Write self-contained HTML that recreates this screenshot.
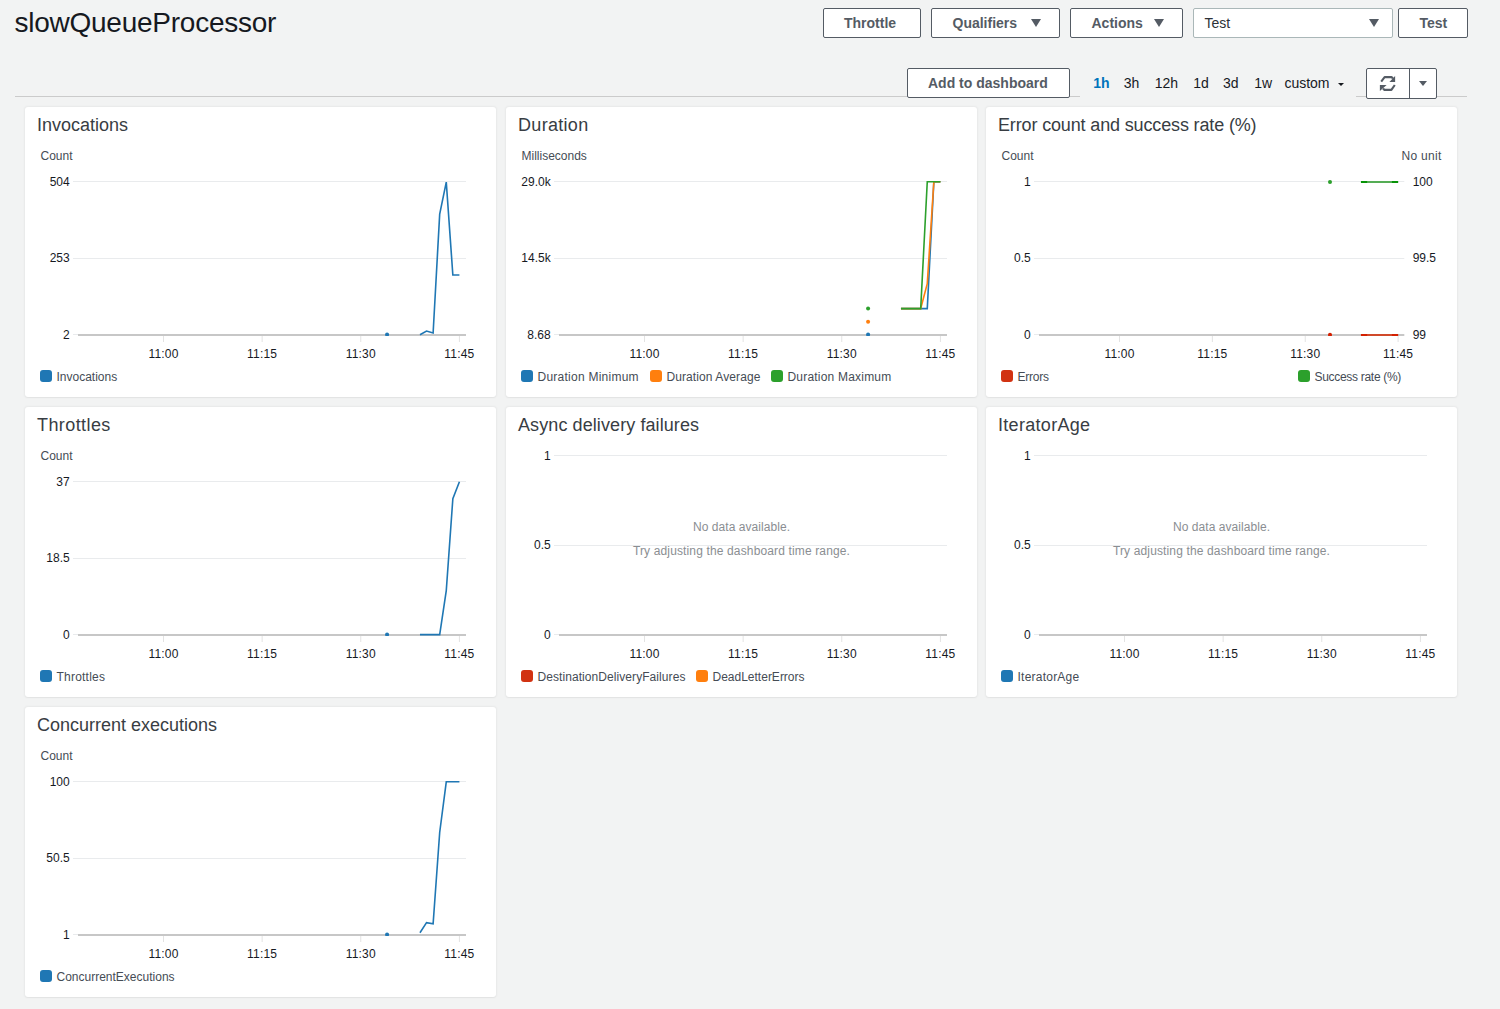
<!DOCTYPE html>
<html><head><meta charset="utf-8">
<style>
html,body{margin:0;padding:0;}
body{width:1500px;height:1009px;overflow:hidden;background:#f2f3f3;position:relative;font-family:"Liberation Sans", sans-serif;}
.t{position:absolute;white-space:nowrap;line-height:1;}
.panel{position:absolute;background:#fff;border-radius:3px;box-shadow:0 0 2px 1px rgba(0,0,0,0.045), 0 1px 1px rgba(0,0,0,0.03);}
.chart{position:absolute;left:0;top:0;}
.sw{position:absolute;width:12px;height:12px;border-radius:3px;}
.btn{position:absolute;box-sizing:border-box;border:1px solid #545b64;border-radius:2px;background:#fff;}
.tri{position:absolute;width:0;height:0;border-left:5px solid transparent;border-right:5px solid transparent;border-top:8px solid #545b64;}
.tri2{position:absolute;width:0;height:0;border-left:4px solid transparent;border-right:4px solid transparent;border-top:5px solid #545b64;}
.caret{position:absolute;width:0;height:0;border-left:3px solid transparent;border-right:3px solid transparent;border-top:3px solid #16191f;}
</style></head><body>
<div class="t" style="left:14.50px;top:9.30px;font-size:28px;color:#16191f;font-weight:normal;letter-spacing:-0.25px;">slowQueueProcessor</div>
<div class="btn" style="left:823px;top:8px;width:98px;height:30px;border-color:#545b64"></div><div class="t" style="left:844.00px;top:16.15px;font-size:14px;color:#545b64;font-weight:bold;">Throttle</div>
<div class="btn" style="left:931px;top:8px;width:129px;height:30px;border-color:#545b64"></div><div class="t" style="left:952.50px;top:16.15px;font-size:14px;color:#545b64;font-weight:bold;">Qualifiers</div><div class="tri" style="left:1031px;top:19px"></div>
<div class="btn" style="left:1070px;top:8px;width:113px;height:30px;border-color:#545b64"></div><div class="t" style="left:1091.50px;top:16.15px;font-size:14px;color:#545b64;font-weight:bold;">Actions</div><div class="tri" style="left:1154px;top:19px"></div>
<div class="btn" style="left:1193px;top:8px;width:200px;height:30px;border-color:#aab7b8"></div><div class="t" style="left:1204.50px;top:16.15px;font-size:14px;color:#2c3137;font-weight:normal;">Test</div><div class="tri" style="left:1369px;top:19px"></div>
<div class="btn" style="left:1398px;top:8px;width:70px;height:30px;border-color:#545b64"></div><div class="t" style="left:1419.50px;top:16.15px;font-size:14px;color:#545b64;font-weight:bold;">Test</div>
<div style="position:absolute;left:15px;top:96px;width:1065px;height:1px;background:#cbcbcb"></div>
<div style="position:absolute;left:1356px;top:96px;width:111px;height:1px;background:#cbcbcb"></div>
<div class="btn" style="left:907px;top:68px;width:163px;height:30px;border-color:#545b64"></div><div class="t" style="left:928.00px;top:76.15px;font-size:14px;color:#545b64;font-weight:bold;">Add to dashboard</div>
<div class="t" style="left:1093.30px;top:76.15px;font-size:14px;color:#0073bb;font-weight:bold;">1h</div>
<div class="t" style="left:1123.70px;top:76.15px;font-size:14px;color:#16191f;font-weight:normal;">3h</div>
<div class="t" style="left:1154.70px;top:76.15px;font-size:14px;color:#16191f;font-weight:normal;">12h</div>
<div class="t" style="left:1193.20px;top:76.15px;font-size:14px;color:#16191f;font-weight:normal;">1d</div>
<div class="t" style="left:1223.00px;top:76.15px;font-size:14px;color:#16191f;font-weight:normal;">3d</div>
<div class="t" style="left:1254.20px;top:76.15px;font-size:14px;color:#16191f;font-weight:normal;">1w</div>
<div class="t" style="left:1284.40px;top:76.15px;font-size:14px;color:#16191f;font-weight:normal;">custom</div>
<div class="caret" style="left:1338px;top:83px"></div>
<div class="btn" style="left:1366px;top:68px;width:71px;height:31px"></div>
<div style="position:absolute;left:1409px;top:68px;width:1px;height:31px;background:#545b64"></div>
<svg style="position:absolute;left:1374px;top:71px" width="28" height="24" viewBox="0 0 28 24">
<path d="M7.2,10.6 L10.6,6.1 L17.5,6.1 L19,7.4" fill="none" stroke="#545b64" stroke-width="2.1" stroke-linejoin="round"/>
<path d="M15.4,10.9 L21.1,10.9 L21.1,5.1 Z" fill="#545b64"/>
<path d="M20.8,14 L17.4,18.9 L10.5,18.9 L9,17.6" fill="none" stroke="#545b64" stroke-width="2.1" stroke-linejoin="round"/>
<path d="M12.6,14 L5.9,14 L5.9,19.9 Z" fill="#545b64"/>
</svg>
<div class="tri2" style="left:1418.5px;top:81px"></div>
<div class="panel" style="left:25px;top:107px;width:471px;height:290px">
<div class="t" style="left:12.00px;top:8.76px;font-size:18px;color:#383d43;font-weight:normal;">Invocations</div>
<div class="t" style="left:15.50px;top:42.84px;font-size:12px;color:#454c55;font-weight:normal;">Count</div>
<svg class="chart" width="471" height="290" viewBox="0 0 471 290"><line x1="48" y1="74.5" x2="441" y2="74.5" stroke="#e9ebed" stroke-width="1"/><line x1="48" y1="151.5" x2="441" y2="151.5" stroke="#e9ebed" stroke-width="1"/><line x1="48" y1="227.5" x2="53" y2="227.5" stroke="#e9ebed" stroke-width="1"/><clipPath id="c25_107"><rect x="53" y="0" width="393" height="229"/></clipPath><line x1="53" y1="228" x2="441" y2="228" stroke="#c7c7c7" stroke-width="2"/><line x1="138.49" y1="229" x2="138.49" y2="235" stroke="#e3e3e3" stroke-width="1"/><line x1="237.14" y1="229" x2="237.14" y2="235" stroke="#e3e3e3" stroke-width="1"/><line x1="335.78" y1="229" x2="335.78" y2="235" stroke="#e3e3e3" stroke-width="1"/><line x1="434.42" y1="229" x2="434.42" y2="235" stroke="#e3e3e3" stroke-width="1"/><g clip-path="url(#c25_107)"><path d="M394.97,227.80 L401.54,224.00 L408.12,226.00 L414.69,107.20 L421.27,75.10 L427.85,168.00 L434.42,168.00" fill="none" stroke="#1f77b4" stroke-width="1.6" stroke-linejoin="miter"/><circle cx="362.08" cy="227.5" r="2" fill="#1f77b4"/></g></svg>
<div class="t" style="right:calc(100% - 44.70px);top:68.84px;font-size:12px;color:#16191f;font-weight:normal;">504</div>
<div class="t" style="right:calc(100% - 44.70px);top:144.84px;font-size:12px;color:#16191f;font-weight:normal;">253</div>
<div class="t" style="right:calc(100% - 44.70px);top:221.84px;font-size:12px;color:#16191f;font-weight:normal;">2</div>
<div class="t" style="left:138.49px;transform:translateX(-50%);top:240.84px;font-size:12px;color:#16191f;font-weight:normal;letter-spacing:0.2px;">11:00</div>
<div class="t" style="left:237.14px;transform:translateX(-50%);top:240.84px;font-size:12px;color:#16191f;font-weight:normal;letter-spacing:0.2px;">11:15</div>
<div class="t" style="left:335.78px;transform:translateX(-50%);top:240.84px;font-size:12px;color:#16191f;font-weight:normal;letter-spacing:0.2px;">11:30</div>
<div class="t" style="left:434.42px;transform:translateX(-50%);top:240.84px;font-size:12px;color:#16191f;font-weight:normal;letter-spacing:0.2px;">11:45</div>
<div class="sw" style="left:15px;top:263px;background:#1f77b4"></div>
<div class="t" style="left:31.50px;top:263.84px;font-size:12px;color:#454c55;font-weight:normal;">Invocations</div>
</div>
<div class="panel" style="left:506px;top:107px;width:471px;height:290px">
<div class="t" style="left:12.00px;top:8.76px;font-size:18px;color:#383d43;font-weight:normal;letter-spacing:0.31px;">Duration</div>
<div class="t" style="left:15.50px;top:42.84px;font-size:12px;color:#454c55;font-weight:normal;">Milliseconds</div>
<svg class="chart" width="471" height="290" viewBox="0 0 471 290"><line x1="48" y1="74.5" x2="441" y2="74.5" stroke="#e9ebed" stroke-width="1"/><line x1="48" y1="151.5" x2="441" y2="151.5" stroke="#e9ebed" stroke-width="1"/><line x1="48" y1="227.5" x2="53" y2="227.5" stroke="#e9ebed" stroke-width="1"/><clipPath id="c506_107"><rect x="53" y="0" width="393" height="229"/></clipPath><line x1="53" y1="228" x2="441" y2="228" stroke="#c7c7c7" stroke-width="2"/><line x1="138.49" y1="229" x2="138.49" y2="235" stroke="#e3e3e3" stroke-width="1"/><line x1="237.14" y1="229" x2="237.14" y2="235" stroke="#e3e3e3" stroke-width="1"/><line x1="335.78" y1="229" x2="335.78" y2="235" stroke="#e3e3e3" stroke-width="1"/><line x1="434.42" y1="229" x2="434.42" y2="235" stroke="#e3e3e3" stroke-width="1"/><g clip-path="url(#c506_107)"><path d="M394.97,201.60 L414.69,201.60 L421.27,201.60 L427.85,74.80 L434.42,74.80" fill="none" stroke="#1f77b4" stroke-width="1.6" stroke-linejoin="miter"/><path d="M394.97,201.60 L414.69,201.60 L421.27,176.60 L427.85,74.80 L434.42,74.80" fill="none" stroke="#ff7f0e" stroke-width="1.6" stroke-linejoin="miter"/><path d="M394.97,201.60 L414.69,201.60 L421.27,74.80 L427.85,74.80 L434.42,74.80" fill="none" stroke="#2ca02c" stroke-width="1.6" stroke-linejoin="miter"/><circle cx="362.08" cy="227.5" r="2" fill="#1f77b4"/><circle cx="362.08" cy="214.8" r="2" fill="#ff7f0e"/><circle cx="362.08" cy="201.4" r="2" fill="#2ca02c"/></g></svg>
<div class="t" style="right:calc(100% - 44.70px);top:68.84px;font-size:12px;color:#16191f;font-weight:normal;">29.0k</div>
<div class="t" style="right:calc(100% - 44.70px);top:144.84px;font-size:12px;color:#16191f;font-weight:normal;">14.5k</div>
<div class="t" style="right:calc(100% - 44.70px);top:221.84px;font-size:12px;color:#16191f;font-weight:normal;">8.68</div>
<div class="t" style="left:138.49px;transform:translateX(-50%);top:240.84px;font-size:12px;color:#16191f;font-weight:normal;letter-spacing:0.2px;">11:00</div>
<div class="t" style="left:237.14px;transform:translateX(-50%);top:240.84px;font-size:12px;color:#16191f;font-weight:normal;letter-spacing:0.2px;">11:15</div>
<div class="t" style="left:335.78px;transform:translateX(-50%);top:240.84px;font-size:12px;color:#16191f;font-weight:normal;letter-spacing:0.2px;">11:30</div>
<div class="t" style="left:434.42px;transform:translateX(-50%);top:240.84px;font-size:12px;color:#16191f;font-weight:normal;letter-spacing:0.2px;">11:45</div>
<div class="sw" style="left:15px;top:263px;background:#1f77b4"></div>
<div class="t" style="left:31.50px;top:263.84px;font-size:12px;color:#454c55;font-weight:normal;letter-spacing:0.25px;">Duration Minimum</div>
<div class="sw" style="left:144px;top:263px;background:#ff7f0e"></div>
<div class="t" style="left:160.50px;top:263.84px;font-size:12px;color:#454c55;font-weight:normal;letter-spacing:0.09px;">Duration Average</div>
<div class="sw" style="left:265px;top:263px;background:#2ca02c"></div>
<div class="t" style="left:281.50px;top:263.84px;font-size:12px;color:#454c55;font-weight:normal;letter-spacing:0.2px;">Duration Maximum</div>
</div>
<div class="panel" style="left:986px;top:107px;width:471px;height:290px">
<div class="t" style="left:12.00px;top:8.76px;font-size:18px;color:#383d43;font-weight:normal;letter-spacing:-0.145px;">Error count and success rate (%)</div>
<div class="t" style="left:15.50px;top:42.84px;font-size:12px;color:#454c55;font-weight:normal;">Count</div>
<div class="t" style="right:calc(100% - 455.50px);top:42.84px;font-size:12px;color:#454c55;font-weight:normal;letter-spacing:0.28px;">No unit</div>
<svg class="chart" width="471" height="290" viewBox="0 0 471 290"><line x1="48" y1="74.5" x2="418.3" y2="74.5" stroke="#e9ebed" stroke-width="1"/><line x1="48" y1="151.5" x2="418.3" y2="151.5" stroke="#e9ebed" stroke-width="1"/><line x1="48" y1="227.5" x2="53" y2="227.5" stroke="#e9ebed" stroke-width="1"/><clipPath id="c986_107"><rect x="53" y="0" width="370.3" height="229"/></clipPath><line x1="53" y1="228" x2="418.3" y2="228" stroke="#c7c7c7" stroke-width="2"/><line x1="133.49" y1="229" x2="133.49" y2="235" stroke="#e3e3e3" stroke-width="1"/><line x1="226.36" y1="229" x2="226.36" y2="235" stroke="#e3e3e3" stroke-width="1"/><line x1="319.24" y1="229" x2="319.24" y2="235" stroke="#e3e3e3" stroke-width="1"/><line x1="412.11" y1="229" x2="412.11" y2="235" stroke="#e3e3e3" stroke-width="1"/><g clip-path="url(#c986_107)"><path d="M374.96,228.00 L412.11,228.00" fill="none" stroke="#d04a2a" stroke-width="2" stroke-linejoin="miter"/><path d="M374.96,228.00 L381.15,228.00" fill="none" stroke="#d42000" stroke-width="2" stroke-linejoin="miter"/><path d="M405.92,228.00 L412.11,228.00" fill="none" stroke="#d42000" stroke-width="2" stroke-linejoin="miter"/><path d="M374.96,75.00 L412.11,75.00" fill="none" stroke="#55ad55" stroke-width="2" stroke-linejoin="miter"/><path d="M374.96,75.00 L381.15,75.00" fill="none" stroke="#079307" stroke-width="2" stroke-linejoin="miter"/><path d="M405.92,75.00 L412.11,75.00" fill="none" stroke="#079307" stroke-width="2" stroke-linejoin="miter"/><circle cx="344.00" cy="227.8" r="2" fill="#d42000"/><circle cx="344.00" cy="75" r="2" fill="#2ca02c"/></g></svg>
<div class="t" style="right:calc(100% - 44.70px);top:68.84px;font-size:12px;color:#16191f;font-weight:normal;">1</div>
<div class="t" style="right:calc(100% - 44.70px);top:144.84px;font-size:12px;color:#16191f;font-weight:normal;">0.5</div>
<div class="t" style="right:calc(100% - 44.70px);top:221.84px;font-size:12px;color:#16191f;font-weight:normal;">0</div>
<div class="t" style="left:426.70px;top:68.84px;font-size:12px;color:#16191f;font-weight:normal;">100</div>
<div class="t" style="left:426.70px;top:144.84px;font-size:12px;color:#16191f;font-weight:normal;">99.5</div>
<div class="t" style="left:426.70px;top:221.84px;font-size:12px;color:#16191f;font-weight:normal;">99</div>
<div class="t" style="left:133.49px;transform:translateX(-50%);top:240.84px;font-size:12px;color:#16191f;font-weight:normal;letter-spacing:0.2px;">11:00</div>
<div class="t" style="left:226.36px;transform:translateX(-50%);top:240.84px;font-size:12px;color:#16191f;font-weight:normal;letter-spacing:0.2px;">11:15</div>
<div class="t" style="left:319.24px;transform:translateX(-50%);top:240.84px;font-size:12px;color:#16191f;font-weight:normal;letter-spacing:0.2px;">11:30</div>
<div class="t" style="left:412.11px;transform:translateX(-50%);top:240.84px;font-size:12px;color:#16191f;font-weight:normal;letter-spacing:0.2px;">11:45</div>
<div class="sw" style="left:15px;top:263px;background:#d13212"></div>
<div class="t" style="left:31.50px;top:263.84px;font-size:12px;color:#454c55;font-weight:normal;letter-spacing:-0.25px;">Errors</div>
<div class="sw" style="left:312px;top:263px;background:#2ca02c"></div>
<div class="t" style="left:328.50px;top:263.84px;font-size:12px;color:#454c55;font-weight:normal;letter-spacing:-0.3px;">Success rate (%)</div>
</div>
<div class="panel" style="left:25px;top:407px;width:471px;height:290px">
<div class="t" style="left:12.00px;top:8.76px;font-size:18px;color:#383d43;font-weight:normal;letter-spacing:0.41px;">Throttles</div>
<div class="t" style="left:15.50px;top:42.84px;font-size:12px;color:#454c55;font-weight:normal;">Count</div>
<svg class="chart" width="471" height="290" viewBox="0 0 471 290"><line x1="48" y1="74.5" x2="441" y2="74.5" stroke="#e9ebed" stroke-width="1"/><line x1="48" y1="151.5" x2="441" y2="151.5" stroke="#e9ebed" stroke-width="1"/><line x1="48" y1="227.5" x2="53" y2="227.5" stroke="#e9ebed" stroke-width="1"/><clipPath id="c25_407"><rect x="53" y="0" width="393" height="229"/></clipPath><line x1="53" y1="228" x2="441" y2="228" stroke="#c7c7c7" stroke-width="2"/><line x1="138.49" y1="229" x2="138.49" y2="235" stroke="#e3e3e3" stroke-width="1"/><line x1="237.14" y1="229" x2="237.14" y2="235" stroke="#e3e3e3" stroke-width="1"/><line x1="335.78" y1="229" x2="335.78" y2="235" stroke="#e3e3e3" stroke-width="1"/><line x1="434.42" y1="229" x2="434.42" y2="235" stroke="#e3e3e3" stroke-width="1"/><g clip-path="url(#c25_407)"><path d="M394.97,227.60 L414.69,227.60 L421.27,183.60 L427.85,91.60 L434.42,74.80" fill="none" stroke="#1f77b4" stroke-width="1.6" stroke-linejoin="miter"/><circle cx="362.08" cy="227.5" r="2" fill="#1f77b4"/></g></svg>
<div class="t" style="right:calc(100% - 44.70px);top:68.84px;font-size:12px;color:#16191f;font-weight:normal;">37</div>
<div class="t" style="right:calc(100% - 44.70px);top:144.84px;font-size:12px;color:#16191f;font-weight:normal;">18.5</div>
<div class="t" style="right:calc(100% - 44.70px);top:221.84px;font-size:12px;color:#16191f;font-weight:normal;">0</div>
<div class="t" style="left:138.49px;transform:translateX(-50%);top:240.84px;font-size:12px;color:#16191f;font-weight:normal;letter-spacing:0.2px;">11:00</div>
<div class="t" style="left:237.14px;transform:translateX(-50%);top:240.84px;font-size:12px;color:#16191f;font-weight:normal;letter-spacing:0.2px;">11:15</div>
<div class="t" style="left:335.78px;transform:translateX(-50%);top:240.84px;font-size:12px;color:#16191f;font-weight:normal;letter-spacing:0.2px;">11:30</div>
<div class="t" style="left:434.42px;transform:translateX(-50%);top:240.84px;font-size:12px;color:#16191f;font-weight:normal;letter-spacing:0.2px;">11:45</div>
<div class="sw" style="left:15px;top:263px;background:#1f77b4"></div>
<div class="t" style="left:31.50px;top:263.84px;font-size:12px;color:#454c55;font-weight:normal;letter-spacing:0.22px;">Throttles</div>
</div>
<div class="panel" style="left:506px;top:407px;width:471px;height:290px">
<div class="t" style="left:12.00px;top:8.76px;font-size:18px;color:#383d43;font-weight:normal;letter-spacing:0.09px;">Async delivery failures</div>
<svg class="chart" width="471" height="290" viewBox="0 0 471 290"><line x1="48" y1="48.5" x2="441" y2="48.5" stroke="#e9ebed" stroke-width="1"/><line x1="48" y1="138.5" x2="441" y2="138.5" stroke="#e9ebed" stroke-width="1"/><line x1="48" y1="227.5" x2="53" y2="227.5" stroke="#e9ebed" stroke-width="1"/><clipPath id="c506_407"><rect x="53" y="0" width="393" height="229"/></clipPath><line x1="53" y1="228" x2="441" y2="228" stroke="#c7c7c7" stroke-width="2"/><line x1="138.49" y1="229" x2="138.49" y2="235" stroke="#e3e3e3" stroke-width="1"/><line x1="237.14" y1="229" x2="237.14" y2="235" stroke="#e3e3e3" stroke-width="1"/><line x1="335.78" y1="229" x2="335.78" y2="235" stroke="#e3e3e3" stroke-width="1"/><line x1="434.42" y1="229" x2="434.42" y2="235" stroke="#e3e3e3" stroke-width="1"/><g clip-path="url(#c506_407)"></g></svg>
<div class="t" style="right:calc(100% - 44.70px);top:42.84px;font-size:12px;color:#16191f;font-weight:normal;">1</div>
<div class="t" style="right:calc(100% - 44.70px);top:131.84px;font-size:12px;color:#16191f;font-weight:normal;">0.5</div>
<div class="t" style="right:calc(100% - 44.70px);top:221.84px;font-size:12px;color:#16191f;font-weight:normal;">0</div>
<div class="t" style="left:138.49px;transform:translateX(-50%);top:240.84px;font-size:12px;color:#16191f;font-weight:normal;letter-spacing:0.2px;">11:00</div>
<div class="t" style="left:237.14px;transform:translateX(-50%);top:240.84px;font-size:12px;color:#16191f;font-weight:normal;letter-spacing:0.2px;">11:15</div>
<div class="t" style="left:335.78px;transform:translateX(-50%);top:240.84px;font-size:12px;color:#16191f;font-weight:normal;letter-spacing:0.2px;">11:30</div>
<div class="t" style="left:434.42px;transform:translateX(-50%);top:240.84px;font-size:12px;color:#16191f;font-weight:normal;letter-spacing:0.2px;">11:45</div>
<div class="sw" style="left:15px;top:263px;background:#d13212"></div>
<div class="t" style="left:31.50px;top:263.84px;font-size:12px;color:#454c55;font-weight:normal;letter-spacing:0.07px;">DestinationDeliveryFailures</div>
<div class="sw" style="left:190px;top:263px;background:#ff7f0e"></div>
<div class="t" style="left:206.50px;top:263.84px;font-size:12px;color:#454c55;font-weight:normal;">DeadLetterErrors</div>
<div class="t" style="left:235.50px;transform:translateX(-50%);top:113.84px;font-size:12px;color:#8a8e92;font-weight:normal;letter-spacing:0.06px;">No data available.</div>
<div class="t" style="left:235.50px;transform:translateX(-50%);top:137.54px;font-size:12px;color:#8a8e92;font-weight:normal;letter-spacing:0.14px;">Try adjusting the dashboard time range.</div>
</div>
<div class="panel" style="left:986px;top:407px;width:471px;height:290px">
<div class="t" style="left:12.00px;top:8.76px;font-size:18px;color:#383d43;font-weight:normal;letter-spacing:0.3px;">IteratorAge</div>
<svg class="chart" width="471" height="290" viewBox="0 0 471 290"><line x1="48" y1="48.5" x2="441" y2="48.5" stroke="#e9ebed" stroke-width="1"/><line x1="48" y1="138.5" x2="441" y2="138.5" stroke="#e9ebed" stroke-width="1"/><line x1="48" y1="227.5" x2="53" y2="227.5" stroke="#e9ebed" stroke-width="1"/><clipPath id="c986_407"><rect x="53" y="0" width="393" height="229"/></clipPath><line x1="53" y1="228" x2="441" y2="228" stroke="#c7c7c7" stroke-width="2"/><line x1="138.49" y1="229" x2="138.49" y2="235" stroke="#e3e3e3" stroke-width="1"/><line x1="237.14" y1="229" x2="237.14" y2="235" stroke="#e3e3e3" stroke-width="1"/><line x1="335.78" y1="229" x2="335.78" y2="235" stroke="#e3e3e3" stroke-width="1"/><line x1="434.42" y1="229" x2="434.42" y2="235" stroke="#e3e3e3" stroke-width="1"/><g clip-path="url(#c986_407)"></g></svg>
<div class="t" style="right:calc(100% - 44.70px);top:42.84px;font-size:12px;color:#16191f;font-weight:normal;">1</div>
<div class="t" style="right:calc(100% - 44.70px);top:131.84px;font-size:12px;color:#16191f;font-weight:normal;">0.5</div>
<div class="t" style="right:calc(100% - 44.70px);top:221.84px;font-size:12px;color:#16191f;font-weight:normal;">0</div>
<div class="t" style="left:138.49px;transform:translateX(-50%);top:240.84px;font-size:12px;color:#16191f;font-weight:normal;letter-spacing:0.2px;">11:00</div>
<div class="t" style="left:237.14px;transform:translateX(-50%);top:240.84px;font-size:12px;color:#16191f;font-weight:normal;letter-spacing:0.2px;">11:15</div>
<div class="t" style="left:335.78px;transform:translateX(-50%);top:240.84px;font-size:12px;color:#16191f;font-weight:normal;letter-spacing:0.2px;">11:30</div>
<div class="t" style="left:434.42px;transform:translateX(-50%);top:240.84px;font-size:12px;color:#16191f;font-weight:normal;letter-spacing:0.2px;">11:45</div>
<div class="sw" style="left:15px;top:263px;background:#1f77b4"></div>
<div class="t" style="left:31.50px;top:263.84px;font-size:12px;color:#454c55;font-weight:normal;letter-spacing:0.23px;">IteratorAge</div>
<div class="t" style="left:235.50px;transform:translateX(-50%);top:113.84px;font-size:12px;color:#8a8e92;font-weight:normal;letter-spacing:0.06px;">No data available.</div>
<div class="t" style="left:235.50px;transform:translateX(-50%);top:137.54px;font-size:12px;color:#8a8e92;font-weight:normal;letter-spacing:0.14px;">Try adjusting the dashboard time range.</div>
</div>
<div class="panel" style="left:25px;top:707px;width:471px;height:290px">
<div class="t" style="left:12.00px;top:8.76px;font-size:18px;color:#383d43;font-weight:normal;">Concurrent executions</div>
<div class="t" style="left:15.50px;top:42.84px;font-size:12px;color:#454c55;font-weight:normal;">Count</div>
<svg class="chart" width="471" height="290" viewBox="0 0 471 290"><line x1="48" y1="74.5" x2="441" y2="74.5" stroke="#e9ebed" stroke-width="1"/><line x1="48" y1="151.5" x2="441" y2="151.5" stroke="#e9ebed" stroke-width="1"/><line x1="48" y1="227.5" x2="53" y2="227.5" stroke="#e9ebed" stroke-width="1"/><clipPath id="c25_707"><rect x="53" y="0" width="393" height="229"/></clipPath><line x1="53" y1="228" x2="441" y2="228" stroke="#c7c7c7" stroke-width="2"/><line x1="138.49" y1="229" x2="138.49" y2="235" stroke="#e3e3e3" stroke-width="1"/><line x1="237.14" y1="229" x2="237.14" y2="235" stroke="#e3e3e3" stroke-width="1"/><line x1="335.78" y1="229" x2="335.78" y2="235" stroke="#e3e3e3" stroke-width="1"/><line x1="434.42" y1="229" x2="434.42" y2="235" stroke="#e3e3e3" stroke-width="1"/><g clip-path="url(#c25_707)"><path d="M394.97,225.70 L401.54,215.60 L408.12,216.70 L414.69,125.50 L421.27,74.80 L434.42,74.80" fill="none" stroke="#1f77b4" stroke-width="1.6" stroke-linejoin="miter"/><circle cx="362.08" cy="227.5" r="2" fill="#1f77b4"/></g></svg>
<div class="t" style="right:calc(100% - 44.70px);top:68.84px;font-size:12px;color:#16191f;font-weight:normal;">100</div>
<div class="t" style="right:calc(100% - 44.70px);top:144.84px;font-size:12px;color:#16191f;font-weight:normal;">50.5</div>
<div class="t" style="right:calc(100% - 44.70px);top:221.84px;font-size:12px;color:#16191f;font-weight:normal;">1</div>
<div class="t" style="left:138.49px;transform:translateX(-50%);top:240.84px;font-size:12px;color:#16191f;font-weight:normal;letter-spacing:0.2px;">11:00</div>
<div class="t" style="left:237.14px;transform:translateX(-50%);top:240.84px;font-size:12px;color:#16191f;font-weight:normal;letter-spacing:0.2px;">11:15</div>
<div class="t" style="left:335.78px;transform:translateX(-50%);top:240.84px;font-size:12px;color:#16191f;font-weight:normal;letter-spacing:0.2px;">11:30</div>
<div class="t" style="left:434.42px;transform:translateX(-50%);top:240.84px;font-size:12px;color:#16191f;font-weight:normal;letter-spacing:0.2px;">11:45</div>
<div class="sw" style="left:15px;top:263px;background:#1f77b4"></div>
<div class="t" style="left:31.50px;top:263.84px;font-size:12px;color:#454c55;font-weight:normal;">ConcurrentExecutions</div>
</div>
</body></html>
